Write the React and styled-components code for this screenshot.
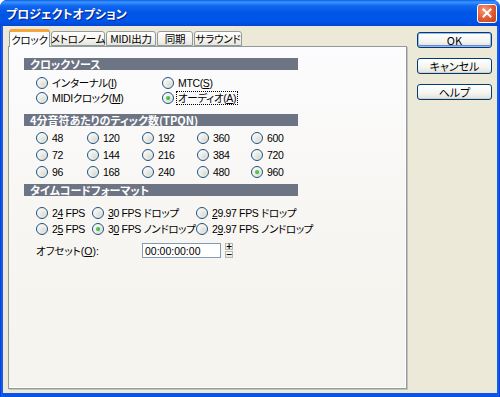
import styled, { createGlobalStyle } from "styled-components";

const GlobalStyle = createGlobalStyle`
  html, body {
    margin: 0;
    padding: 0;
    background: #ffffff;
  }
  body {
    font-family: "Liberation Sans", "Noto Sans CJK JP", sans-serif;
    font-size: 11px;
    font-feature-settings: "palt" 1;
  }
`;

const Window = styled.div`
  width: 500px;
  height: 397px;
  display: flex;
  flex-direction: column;
  background: linear-gradient(to right, #0831d9 0px, #166aee 2px, #0a52e8 3px, #0a52e8 497px, #166aee 498px, #0831d9 500px);
  border-radius: 7px 7px 0 0;
  overflow: hidden;
`;

const TitleBar = styled.div`
  height: 26px;
  flex: none;
  display: flex;
  align-items: center;
  justify-content: space-between;
  padding: 0 3px 0 6px;
  background: linear-gradient(
    to bottom,
    #0a5fe6 0%,
    #3d95ff 8%,
    #1068f0 22%,
    #0055e5 50%,
    #0056ea 80%,
    #0048d6 100%
  );
`;

const Title = styled.span`
  color: #ffffff;
  font-weight: bold;
  font-size: 12px;
  text-shadow: 1px 1px 0 #0a1e80;
  font-family: "Noto Sans CJK JP", sans-serif;
`;

const CloseButton = styled.div`
  width: 20px;
  height: 19px;
  box-sizing: border-box;
  border: 1px solid #ffffff;
  border-radius: 3px;
  background: radial-gradient(circle at 35% 30%, #f39a7e 0%, #e2582f 55%, #c6401d 100%);
  display: flex;
  align-items: center;
  justify-content: center;
`;

const Body = styled.div`
  flex: 1;
  margin: 0 3px 4px 3px;
  background: #ece9d8;
  display: flex;
  gap: 10px;
  padding: 3px 5px 4px 5px;
`;

const TabArea = styled.div`
  width: 399px;
  display: flex;
  flex-direction: column;
`;

const TabRow = styled.div`
  height: 17px;
  display: flex;
  align-items: flex-end;
  padding-left: 1px;
  position: relative;
  z-index: 2;
`;

const Tab = styled.div`
  width: ${(p) => p.w}px;
  height: ${(p) => (p.active ? 18 : 15)}px;
  margin-bottom: ${(p) => (p.active ? -1 : 0)}px;
  margin-left: ${(p) => (p.first ? 0 : 1)}px;
  box-sizing: border-box;
  border: 1px solid #919b9c;
  border-bottom: ${(p) => (p.active ? "none" : "1px solid #919b9c")};
  border-top: ${(p) => (p.active ? "3px solid #f5a53a" : "1px solid #919b9c")};
  border-radius: 3px 3px 0 0;
  background: ${(p) =>
    p.active ? "#fcfcfe" : "linear-gradient(to bottom, #ffffff, #f1f0ea 70%, #e6e4db)"};
  display: flex;
  align-items: center;
  justify-content: center;
  white-space: nowrap;
  font-family: "Noto Sans CJK JP", sans-serif;
  font-size: 10.5px;
  letter-spacing: -0.2px;
  color: #000;
  padding-bottom: ${(p) => (p.active ? 1 : 0)}px;
`;

const Panel = styled.div`
  flex: 1;
  border: 1px solid #919b9c;
  box-shadow: inset -1px -1px 0 #ffffff, 1px 1px 0 #c3c3bd;
  background: linear-gradient(to bottom, #fcfcfe 0%, #f7f6f2 50%, #f4f3ee 100%);
  padding: 0 0 0 15px;
  display: flex;
  flex-direction: column;
`;

const Header = styled.div`
  width: 274px;
  height: 12px;
  margin-top: ${(p) => p.mt}px;
  background: #6d7484;
  color: #ffffff;
  font-weight: bold;
  font-size: 11px;
  line-height: 12px;
  padding-left: 6px;
  box-sizing: border-box;
  white-space: nowrap;
  font-family: "Noto Sans CJK JP", sans-serif;
`;

const RadioGrid = styled.div`
  display: grid;
  grid-template-columns: ${(p) => p.cols};
  grid-auto-rows: ${(p) => p.rowH}px;
  margin-top: ${(p) => p.mt}px;
  padding-left: 12px;
`;

const RadioItem = styled.div`
  display: flex;
  align-items: center;
  gap: 2px;
  white-space: nowrap;
  color: #000;
`;

const Circle = styled.span`
  width: 12px;
  height: 12px;
  flex: none;
  box-sizing: border-box;
  border-radius: 50%;
  border: 1px solid #1c5180;
  background: radial-gradient(circle at 70% 70%, #dcdcd5 0%, #eeeee9 45%, #ffffff 90%);
  display: flex;
  align-items: center;
  justify-content: center;
`;

const Dot = styled.span`
  width: 4px;
  height: 4px;
  border-radius: 50%;
  background: radial-gradient(circle at 35% 35%, #5ed35e, #21a121);
`;

const Label = styled.span`
  font-size: 10.5px;
  letter-spacing: -0.35px;
  line-height: 12px;
  padding: 0 1px;
  border: 1px dotted ${(p) => (p.focus ? "#000" : "transparent")};
`;

const OffsetRow = styled.div`
  display: flex;
  align-items: center;
  margin-top: 5px;
  height: 17px;
  padding-left: 12px;
`;

const OffsetLabel = styled.span`
  width: 106px;
  color: #000;
  font-size: 10.5px;
  white-space: nowrap;
`;

const TextInput = styled.div`
  width: 79px;
  height: 15px;
  box-sizing: border-box;
  border: 1px solid #7f9db9;
  background: #ffffff;
  display: flex;
  align-items: center;
  padding-left: 2px;
  font-size: 10.5px;
  color: #000;
`;

const Spinner = styled.div`
  display: flex;
  flex-direction: column;
  margin-left: 4px;
  gap: 1px;
`;

const SpinButton = styled.div`
  width: 8px;
  height: 7px;
  box-sizing: border-box;
  border: 1px solid #b7b7b0;
  background: linear-gradient(to bottom, #ffffff, #e6e4db);
  font-size: 8px;
  line-height: 5px;
  display: flex;
  align-items: center;
  justify-content: center;
  color: #000;
  font-family: "DejaVu Sans", sans-serif;
  font-weight: bold;
`;

const ButtonColumn = styled.div`
  display: flex;
  flex-direction: column;
  gap: 10px;
  padding-top: 3px;
`;

const Button = styled.div`
  width: 75px;
  height: 16px;
  box-sizing: border-box;
  border: 1px solid #003c74;
  border-radius: 3px;
  background: linear-gradient(to bottom, #ffffff 0%, #f4f4f0 60%, #e3e2da 100%);
  box-shadow: ${(p) =>
    p.primary ? "inset 0 0 0 1px #9ab8f3, inset 0 -1px 0 1px #6989d8" : "inset 0 -1px 0 #d6d0c5"};
  display: flex;
  align-items: center;
  justify-content: center;
  color: #000;
  font-family: "Noto Sans CJK JP", sans-serif;
  font-size: 11px;
`;

const Radio = ({ checked, focus, children }) => (
  <RadioItem>
    <Circle>{checked && <Dot />}</Circle>
    <Label focus={focus}>{children}</Label>
  </RadioItem>
);

const tpqn = [48, 120, 192, 360, 600, 72, 144, 216, 384, 720, 96, 168, 240, 480, 960];

const tabs = [
  { label: "クロック", w: 41, active: true },
  { label: "メトロノーム", w: 54 },
  { label: "MIDI出力", w: 50 },
  { label: "同期", w: 36 },
  { label: "サラウンド", w: 48 },
];

export default function App() {
  return (
    <>
      <GlobalStyle />
      <Window>
        <TitleBar>
          <Title>プロジェクトオプション</Title>
          <CloseButton>
            <svg width="10" height="10" viewBox="0 0 10 10">
              <path d="M1.5 1.5 L8.5 8.5 M8.5 1.5 L1.5 8.5" stroke="#fff" strokeWidth="2" strokeLinecap="square" />
            </svg>
          </CloseButton>
        </TitleBar>
        <Body>
          <TabArea>
            <TabRow>
              {tabs.map((t, i) => (
                <Tab key={t.label} w={t.w} active={t.active} first={i === 0}>
                  {t.label}
                </Tab>
              ))}
            </TabRow>
            <Panel>
              <Header mt={11}>クロックソース</Header>
              <RadioGrid cols="126px auto" rowH={15} mt={5}>
                <Radio>インターナル(<u>I</u>)</Radio>
                <Radio>MTC(<u>S</u>)</Radio>
                <Radio>MIDIクロック(<u>M</u>)</Radio>
                <Radio checked focus>オーディオ(<u>A</u>)</Radio>
              </RadioGrid>

              <Header mt={9}>4分音符あたりのティック数(TPQN)</Header>
              <RadioGrid cols="51px 55px 55px 54px 54px" rowH={17} mt={3}>
                {tpqn.map((v) => (
                  <Radio key={v} checked={v === 960}>
                    {v}
                  </Radio>
                ))}
              </RadioGrid>

              <Header mt={4}>タイムコードフォーマット</Header>
              <RadioGrid cols="56px 104px auto" rowH={16} mt={9}>
                <Radio>2<u>4</u> FPS</Radio>
                <Radio><u>3</u>0 FPS ドロップ</Radio>
                <Radio><u>2</u>9.97 FPS ドロップ</Radio>
                <Radio>2<u>5</u> FPS</Radio>
                <Radio checked>3<u>0</u> FPS ノンドロップ</Radio>
                <Radio>2<u>9</u>.97 FPS ノンドロップ</Radio>
              </RadioGrid>

              <OffsetRow>
                <OffsetLabel>オフセット(<u>O</u>):</OffsetLabel>
                <TextInput>00:00:00:00</TextInput>
                <Spinner>
                  <SpinButton>+</SpinButton>
                  <SpinButton>−</SpinButton>
                </Spinner>
              </OffsetRow>
            </Panel>
          </TabArea>
          <ButtonColumn>
            <Button primary>OK</Button>
            <Button>キャンセル</Button>
            <Button>ヘルプ</Button>
          </ButtonColumn>
        </Body>
      </Window>
    </>
  );
}
